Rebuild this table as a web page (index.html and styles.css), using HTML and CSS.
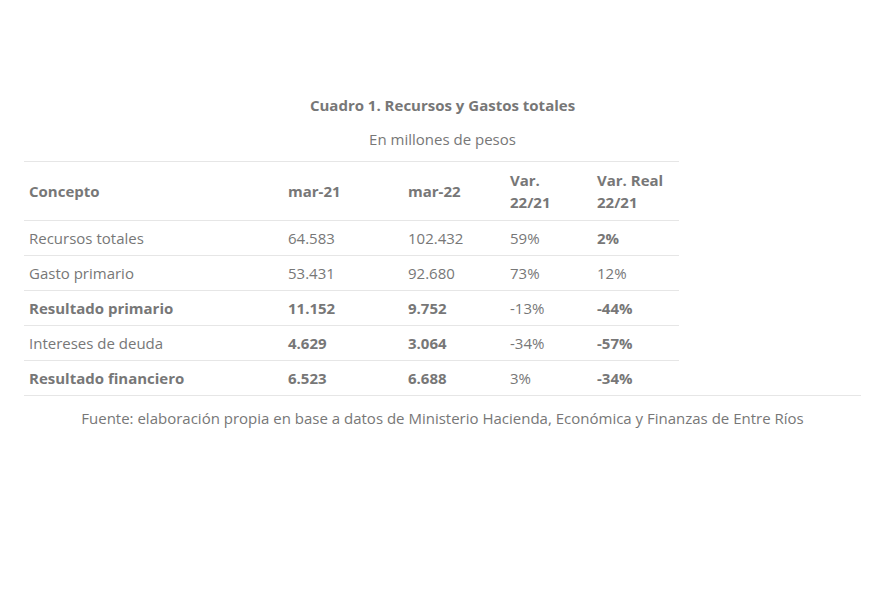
FILE: index.html
```html
<!DOCTYPE html>
<html lang="es">
<head>
<meta charset="utf-8">
<title>Cuadro 1</title>
<link rel="stylesheet" href="styles.css">
</head>
<body>
<div class="page">
  <figure class="figure">
    <h3 class="title">Cuadro 1. Recursos y Gastos totales</h3>
    <p class="subtitle">En millones de pesos</p>
    <table class="data">
      <colgroup>
        <col class="c1"><col class="c2"><col class="c3"><col class="c4"><col class="c5">
      </colgroup>
      <thead>
        <tr><th>Concepto</th><th>mar-21</th><th>mar-22</th><th>Var.<br>22/21</th><th>Var. Real<br>22/21</th></tr>
      </thead>
      <tbody>
        <tr><td>Recursos totales</td><td>64.583</td><td>102.432</td><td>59%</td><td><b>2%</b></td></tr>
        <tr><td>Gasto primario</td><td>53.431</td><td>92.680</td><td>73%</td><td>12%</td></tr>
        <tr><td><b>Resultado primario</b></td><td><b>11.152</b></td><td><b>9.752</b></td><td>-13%</td><td><b>-44%</b></td></tr>
        <tr><td>Intereses de deuda</td><td><b>4.629</b></td><td><b>3.064</b></td><td>-34%</td><td><b>-57%</b></td></tr>
        <tr><td><b>Resultado financiero</b></td><td><b>6.523</b></td><td><b>6.688</b></td><td>3%</td><td><b>-34%</b></td></tr>
      </tbody>
    </table>
    <figcaption class="caption">Fuente: elaboración propia en base a datos de Ministerio Hacienda, Económica y Finanzas de Entre Ríos</figcaption>
  </figure>
</div>
</body>
</html>
```

FILE: styles.css
```css
html, body {
  margin: 0;
  padding: 0;
  background: #ffffff;
}
body {
  font-family: "Open Sans", "Liberation Sans", sans-serif;
  font-size: 15px;
  line-height: 1.5;
  color: #777777;
}
.page {
  padding: 94px 15px 0 24px;
}
.figure {
  margin: 0;
  width: 837px;
}
.title {
  margin: 0;
  font-size: 15px;
  font-weight: 700;
  line-height: 22px;
  text-align: center;
  color: #777777;
}
.subtitle {
  margin: 12px 0 0;
  line-height: 22px;
  text-align: center;
}
.data {
  margin-top: 11px;
  width: 655px;
  border-collapse: collapse;
  border-top: 1px solid #e6e6e6;
}
.c1 { width: 259px; }
.c2 { width: 120px; }
.c3 { width: 102px; }
.c4 { width: 87px; }
.c5 { width: 87px; }
.data th,
.data td {
  padding: 6px 5px;
  text-align: left;
  vertical-align: middle;
  line-height: 22px;
  border-bottom: 1px solid #e6e6e6;
}
.data th {
  font-weight: 700;
  padding-top: 7px;
  padding-bottom: 7px;
  line-height: 22px;
}
.data tbody tr:last-child td {
  border-bottom: none;
}
.data b {
  font-weight: 700;
}
.caption {
  border-top: 1px solid #e6e6e6;
  padding-top: 11px;
  text-align: center;
  line-height: 22px;
}
```
